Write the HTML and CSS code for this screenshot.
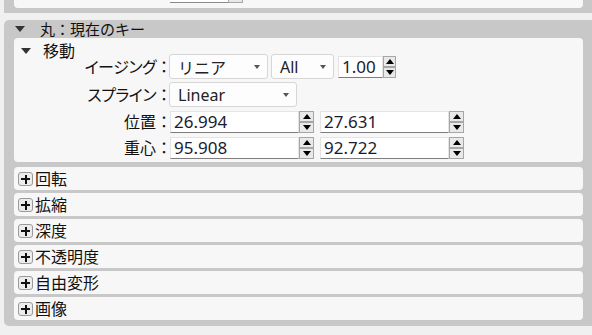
FILE: index.html
```html
<!DOCTYPE html>
<html lang="ja">
<head>
    <meta charset="UTF-8">
    <title>現在のキー</title>
    <link rel="stylesheet" href="styles.css">
</head>
<body>
    <div class="prev">
        <div class="prev-body">
            <div class="stub"><span class="stub-field"></span><span class="stub-spin"></span></div>
        </div>
    </div>

    <div class="panel">
        <div class="panel-head">
            <svg class="tri" width="10" height="6" viewBox="0 0 10 6"><polygon points="0,0 10,0 5,6"/></svg>
            <span>丸：現在のキー</span>
        </div>
        <div class="panel-body">
            <div class="group open">
                <div class="group-head">
                    <svg class="tri" width="10" height="6" viewBox="0 0 10 6"><polygon points="0,0 10,0 5,6"/></svg>
                    <span>移動</span>
                </div>
                <div class="form">
                    <label><span class="kana">イージング</span><span class="colon">：</span></label>
                    <div class="ctrls">
                        <div class="select w-ease"><span>リニア</span><i class="caret"></i></div>
                        <div class="select w-axis"><span>All</span><i class="caret"></i></div>
                        <div class="num w-rate">
                            <span class="field">1.00</span>
                            <span class="spin"><b class="up"></b><b class="down"></b></span>
                        </div>
                    </div>

                    <label><span class="kana">スプライン</span><span class="colon">：</span></label>
                    <div class="ctrls">
                        <div class="select w-spline"><span>Linear</span><i class="caret"></i></div>
                    </div>

                    <label>位置<span class="colon">：</span></label>
                    <div class="ctrls pair">
                        <div class="num w-val">
                            <span class="field">26.994</span>
                            <span class="spin wide"><b class="up"></b><b class="down"></b></span>
                        </div>
                        <div class="num w-val">
                            <span class="field">27.631</span>
                            <span class="spin wide"><b class="up"></b><b class="down"></b></span>
                        </div>
                    </div>

                    <label>重心<span class="colon">：</span></label>
                    <div class="ctrls pair">
                        <div class="num w-val">
                            <span class="field">95.908</span>
                            <span class="spin wide"><b class="up"></b><b class="down"></b></span>
                        </div>
                        <div class="num w-val">
                            <span class="field">92.722</span>
                            <span class="spin wide"><b class="up"></b><b class="down"></b></span>
                        </div>
                    </div>
                </div>
            </div>

            <div class="group closed"><span class="plus"></span>回転</div>
            <div class="group closed"><span class="plus"></span>拡縮</div>
            <div class="group closed"><span class="plus"></span>深度</div>
            <div class="group closed"><span class="plus"></span>不透明度</div>
            <div class="group closed"><span class="plus"></span>自由変形</div>
            <div class="group closed"><span class="plus"></span>画像</div>
        </div>
    </div>
</body>
</html>
```

FILE: styles.css
```css
body {
    margin: 0;
    background-color: #f0f0f0;
    font-family: "Noto Sans", "Noto Sans CJK JP", sans-serif;
    color: #111;
    overflow: hidden;
}

/* tail of the panel above */
.prev {
    margin-left: 4px;
    height: 13px;
    padding: 0 9px 0 10px;
    background-color: #c8c8c8;
}
.prev-body {
    height: 8px;
    background-color: #f7f7f7;
    border-radius: 0 0 4px 4px;
}
.stub {
    display: flex;
    margin-left: 156px;
}
.stub-field {
    width: 58px;
    height: 2px;
    background-color: #fff;
    border-bottom: 1px solid #8a8a8a;
}
.stub-spin {
    width: 13px;
    height: 2px;
    background-color: #e8e8e8;
    border: 1px solid #a6a6a6;
    border-top: none;
}

.panel {
    margin: 7px 0 0 4px;
    padding: 0 9px 6px 10px;
    background-color: #c8c8c8;
    border-radius: 5px 0 0 5px;
}
.panel-head {
    height: 18px;
    display: flex;
    align-items: center;
    gap: 15px;
    padding-left: 1px;
    font-size: 15px;
    line-height: 18px;
}
.tri polygon {
    fill: #333;
}
.panel-body {
    display: flex;
    flex-direction: column;
    gap: 3px;
}

.group {
    background-color: #f7f7f7;
    border-radius: 4px;
}
.group.open {
    padding-bottom: 3px;
    margin-bottom: 2px;
}
.group-head {
    height: 16px;
    display: flex;
    align-items: center;
    gap: 12px;
    padding: 5px 0 0 7px;
    margin-bottom: -5px;
    font-size: 16px;
    line-height: 16px;
}

.form {
    display: grid;
    grid-template-columns: 155px auto;
    grid-template-rows: 25px 25px 23px 23px;
    row-gap: 3px;
}
.form label {
    text-align: right;
    align-self: center;
    font-size: 16px;
    line-height: 20px;
    white-space: nowrap;
}
.form .kana {
    font-feature-settings: "palt";
    letter-spacing: -0.5px;
}
.form .colon {
    margin-right: -3px;
}
.ctrls {
    display: flex;
    align-items: center;
    gap: 3px;
}
.ctrls.pair {
    gap: 6px;
    padding-left: 1px;
}

.select {
    box-sizing: border-box;
    height: 25px;
    display: flex;
    align-items: center;
    justify-content: space-between;
    padding: 0 7px 0 8px;
    background-color: #fdfdfd;
    border: 1px solid #d6d6d6;
    border-radius: 3px;
    font-size: 16px;
    color: #222;
}
.caret {
    width: 0;
    height: 0;
    border-left: 3px solid transparent;
    border-right: 3px solid transparent;
    border-top: 4px solid #555;
}
.w-ease { width: 99px; }
.w-axis { width: 63px; }
.w-spline { width: 128px; }

.num {
    display: flex;
    height: 22px;
}
.w-rate {
    margin-left: 1px;
}
.field {
    box-sizing: border-box;
    height: 22px;
    padding-left: 3px;
    background-color: #fff;
    border: 1px solid #e4e4e4;
    border-bottom-color: #7d7d7d;
    font-size: 17px;
    line-height: 20px;
    color: #1b1b2f;
}
.w-rate .field { width: 45px; }
.w-val .field { width: 129px; }

.spin {
    width: 13px;
    height: 22px;
    display: flex;
    flex-direction: column;
}
.spin.wide {
    width: 15px;
}
.spin b {
    flex: 1;
    box-sizing: border-box;
    border: 1px solid #a6a6a6;
    background-color: #e9e9e9;
    display: flex;
    align-items: center;
    justify-content: center;
}
.spin b::after {
    content: "";
    width: 0;
    height: 0;
    border-left: 4px solid transparent;
    border-right: 4px solid transparent;
}
.spin .up::after {
    border-bottom: 5px solid #000;
}
.spin .down::after {
    border-top: 5px solid #000;
}

.group.closed {
    height: 23px;
    display: flex;
    align-items: center;
    gap: 2px;
    padding-left: 4px;
    font-size: 16px;
    line-height: 20px;
}
.plus {
    box-sizing: border-box;
    width: 15px;
    height: 14px;
    margin-top: 1px;
    border: 1px solid #9a9a9a;
    border-radius: 3px;
    background-color: #ececec;
    position: relative;
}
.plus::before,
.plus::after {
    content: "";
    position: absolute;
    background-color: #111;
}
.plus::before {
    left: 2px;
    top: 5px;
    width: 9px;
    height: 2px;
}
.plus::after {
    left: 5.5px;
    top: 1.5px;
    width: 2px;
    height: 9px;
}
```
